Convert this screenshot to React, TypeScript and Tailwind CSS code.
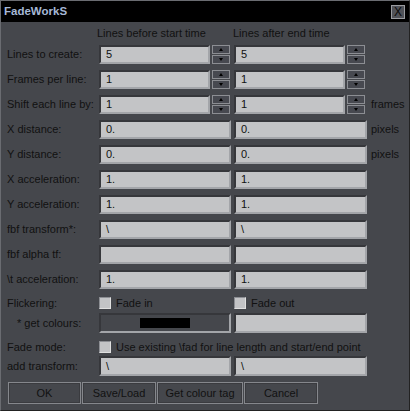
import React from 'react';

const font = { fontFamily: '"Liberation Sans", Arial, sans-serif' };

const Field = ({ value = '', w }: { value?: string; w: string }) => (
  <div
    className={`${w} h-[19px] flex items-center pl-[5px] bg-[#c3c4c6] border-2 border-t-[#36373b] border-l-[#36373b] border-b-[#a3a5a9] border-r-[#a3a5a9] text-[#111] text-[11px] leading-none`}
  >
    {value}
  </div>
);

const SpinBtn = ({ up }: { up?: boolean }) => (
  <div className="w-[18px] h-[9px] flex items-center justify-center bg-[#474950] border border-[#8c8e93]">
    <div
      className={`w-0 h-0 border-l-[2px] border-r-[2px] border-l-transparent border-r-transparent ${
        up ? 'border-b-[3px] border-b-black' : 'border-t-[3px] border-t-black'
      }`}
    />
  </div>
);

const Spin = ({ value }: { value: string }) => (
  <div className="flex items-center gap-[2px]">
    <Field value={value} w="w-[111px]" />
    <div className="flex flex-col gap-[1px]">
      <SpinBtn up />
      <SpinBtn />
    </div>
  </div>
);

const Check = ({ label }: { label: string }) => (
  <div className="flex items-center gap-[5px]">
    <div className="w-[12px] h-[12px] bg-[#c3c4c6] border border-t-[#8c8e93] border-l-[#8c8e93] border-b-[#e0e0e0] border-r-[#e0e0e0]" />
    <span className="whitespace-nowrap">{label}</span>
  </div>
);

const Row = ({
  label,
  children,
  unit,
  cls = 'h-[19px]',
  labelCls = '',
}: {
  label: string;
  children: React.ReactNode;
  unit?: string;
  cls?: string;
  labelCls?: string;
}) => (
  <div className={`grid grid-cols-[89px_132px_133px_auto] gap-x-[3px] items-center ${cls}`}>
    <span className={`whitespace-nowrap ${labelCls}`}>{label}</span>
    {children}
    {unit ? <span className="pl-[1px]">{unit}</span> : <span />}
  </div>
);

export default function App() {
  const spinRows = [
    { label: 'Lines to create:', a: '5', b: '5' },
    { label: 'Frames per line:', a: '1', b: '1' },
    { label: 'Shift each line by:', a: '1', b: '1', unit: 'frames' },
  ];
  const fieldRows = [
    { label: 'X distance:', a: '0.', b: '0.', unit: 'pixels' },
    { label: 'Y distance:', a: '0.', b: '0.', unit: 'pixels' },
    { label: 'X acceleration:', a: '1.', b: '1.' },
    { label: 'Y acceleration:', a: '1.', b: '1.' },
    { label: 'fbf transform*:', a: '\\', b: '\\' },
    { label: 'fbf alpha tf:', a: '', b: '' },
    { label: '\\t acceleration:', a: '1.', b: '1.' },
  ];

  return (
    <div style={font} className="w-[410px] h-[411px] bg-[#45474c] text-[11px] text-[#111] border-l border-t border-[#6a6c71] border-r border-b border-r-[#222] border-b-[#222] flex flex-col">
      {/* Title bar */}
      <div className="h-[21px] bg-black flex items-center justify-between pl-[3px] pr-[4px]">
        <span className="text-[11.5px] font-bold text-[#a6b8d6]">FadeWorkS</span>
        <div className="w-[14px] h-[14px] bg-[#505258] border border-[#9a9ca0] flex items-center justify-center text-[12px] leading-none text-[#0a0a0a]">
          X
        </div>
      </div>

      <div className="pl-[6px] flex flex-col">
        {/* Column headers */}
        <div className="grid grid-cols-[89px_132px_133px_auto] gap-x-[3px] h-[14px] mt-[3px] items-center">
          <span />
          <span className="whitespace-nowrap -ml-[2px]">Lines before start time</span>
          <span className="whitespace-nowrap -ml-[1px]">Lines after end time</span>
        </div>

        <div className="flex flex-col gap-[6px] mt-[6px]">
          {spinRows.map((r) => (
            <Row key={r.label} label={r.label} unit={r.unit}>
              <Spin value={r.a} />
              <Spin value={r.b} />
            </Row>
          ))}
          {fieldRows.map((r) => (
            <Row key={r.label} label={r.label} unit={r.unit}>
              <Field value={r.a} w="w-[132px]" />
              <Field value={r.b} w="w-[133px]" />
            </Row>
          ))}
        </div>

        <Row label="Flickering:" cls="h-[13px] mt-[6px]">
          <Check label="Fade in" />
          <Check label="Fade out" />
        </Row>

        <Row label="* get colours:" cls="h-[20px] mt-[5px]" labelCls="pl-[10px]">
          <div className="w-[132px] h-[20px] flex items-center justify-center border-2 border-t-[#36373b] border-l-[#36373b] border-b-[#a3a5a9] border-r-[#a3a5a9] bg-[#45474c]">
            <div className="w-[50px] h-[10px] bg-black" />
          </div>
          <Field w="w-[133px] h-[20px]" />
        </Row>

        <div className="grid grid-cols-[89px_auto] gap-x-[3px] items-center h-[13px] mt-[6px]">
          <span>Fade mode:</span>
          <Check label="Use existing \fad for line length and start/end point" />
        </div>

        <Row label="add transform:" cls="h-[20px] mt-[4px]">
          <Field value="\" w="w-[132px] h-[20px]" />
          <Field value="\" w="w-[133px] h-[20px]" />
        </Row>

        <div className="flex gap-[1px] mt-[6px] ml-[1px]">
          {[
            ['OK', 'w-[73px]'],
            ['Save/Load', 'w-[74px]'],
            ['Get colour tag', 'w-[86px]'],
            ['Cancel', 'w-[74px]'],
          ].map(([t, w]) => (
            <div
              key={t}
              className={`${w} h-[22px] flex items-center justify-center border border-[#85878c] outline outline-1 outline-[#3a3b3f] -outline-offset-2 bg-[#45474c]`}
            >
              {t}
            </div>
          ))}
        </div>
      </div>
    </div>
  );
}
